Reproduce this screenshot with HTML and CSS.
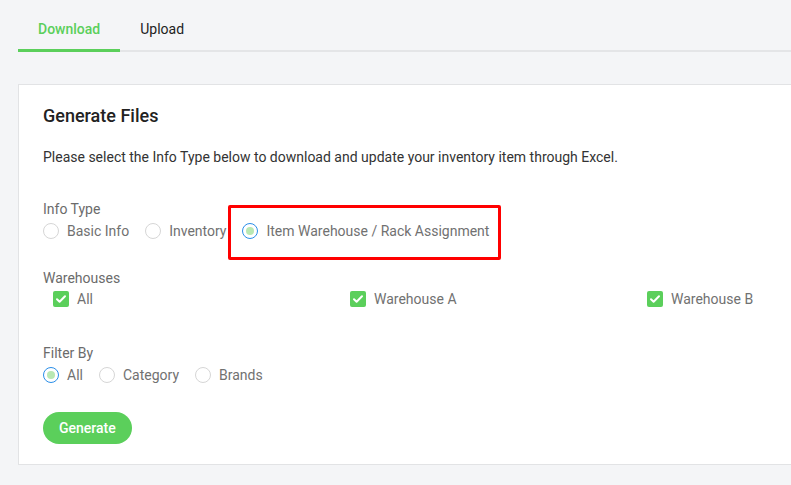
FILE: index.html
```html
<!DOCTYPE html>
<html lang="en">
<head>
  <meta charset="UTF-8" />
  <title>Import / Export Items</title>
  <link rel="stylesheet" href="styles.css">
</head>
<body>
  <div class="page">
    <ul class="tabs">
      <li class="tab active">Download</li>
      <li class="tab">Upload</li>
    </ul>

    <div class="card">
      <h2 class="card-title">Generate Files</h2>
      <p class="card-desc">Please select the Info Type below to download and update your inventory item through Excel.</p>

      <div class="field">
        <div class="field-label">Info Type</div>
        <div class="options">
          <label class="radio"><span class="dot"></span>Basic Info</label>
          <label class="radio"><span class="dot"></span>Inventory</label>
          <label class="radio checked highlight"><span class="dot"></span>Item Warehouse / Rack Assignment</label>
        </div>
      </div>

      <div class="field warehouses">
        <div class="field-label">Warehouses</div>
        <div class="check-grid">
          <label class="check"><span class="box"><svg viewBox="0 0 16 16" width="16" height="16"><path d="M4 8.2l2.6 2.5L12 5.3" fill="none" stroke="#fff" stroke-width="2" stroke-linecap="round" stroke-linejoin="round"/></svg></span>All</label>
          <label class="check"><span class="box"><svg viewBox="0 0 16 16" width="16" height="16"><path d="M4 8.2l2.6 2.5L12 5.3" fill="none" stroke="#fff" stroke-width="2" stroke-linecap="round" stroke-linejoin="round"/></svg></span>Warehouse A</label>
          <label class="check"><span class="box"><svg viewBox="0 0 16 16" width="16" height="16"><path d="M4 8.2l2.6 2.5L12 5.3" fill="none" stroke="#fff" stroke-width="2" stroke-linecap="round" stroke-linejoin="round"/></svg></span>Warehouse B</label>
        </div>
      </div>

      <div class="field filter">
        <div class="field-label">Filter By</div>
        <div class="options">
          <label class="radio checked"><span class="dot"></span>All</label>
          <label class="radio"><span class="dot"></span>Category</label>
          <label class="radio"><span class="dot"></span>Brands</label>
        </div>
      </div>

      <button class="generate-btn">Generate</button>
    </div>
  </div>
</body>
</html>
```

FILE: styles.css
```css
* {
  margin: 0;
  padding: 0;
  box-sizing: border-box;
}

html, body {
  overflow: hidden;
}

body {
  font-family: Roboto, "Liberation Sans", sans-serif;
  background-color: #f4f5f7;
  color: #333;
  font-size: 14px;
}

.page {
  padding: 0 0 0 18px;
  width: 820px;
}

.tabs {
  list-style: none;
  display: flex;
  border-bottom: 2px solid #e4e5e7;
  height: 52px;
}

.tab {
  padding: 21px 20px 0;
  height: 52px;
  font-size: 14px;
  color: #222;
  margin-bottom: -2px;
}

.tab.active {
  color: #5bcf5b;
  font-weight: 500;
  border-bottom: 3px solid #5bcf5b;
}

.card {
  margin-top: 32px;
  background: #fff;
  border: 1px solid #e2e3e5;
  padding: 20px 24px 20px;
  height: 381px;
}

.card-title {
  font-size: 18px;
  font-weight: 500;
  color: #222;
  line-height: 22px;
}

.card-desc {
  margin-top: 20px;
  line-height: 20px;
  color: #333;
}

.field {
  margin-top: 32px;
}

.field.warehouses {
  margin-top: 27px;
}

.field.filter {
  margin-top: 34px;
}

.field-label {
  color: #6b6b6b;
  line-height: 20px;
}

.options {
  display: flex;
  gap: 16px;
  margin-top: 2px;
}

.radio {
  display: flex;
  align-items: center;
  gap: 8px;
  color: #717171;
  line-height: 20px;
  position: relative;
}

.dot {
  width: 16px;
  height: 16px;
  border: 1px solid #d6d6d6;
  border-radius: 50%;
  display: inline-flex;
  align-items: center;
  justify-content: center;
}

.radio.checked .dot {
  border-color: #2a8ee8;
}

.radio.checked .dot::after {
  content: "";
  width: 8px;
  height: 8px;
  border-radius: 50%;
  background: #b9e8b3;
}

/* annotation box around the selected option */
.radio.highlight::after {
  content: "";
  position: absolute;
  left: -14px;
  right: -12px;
  top: -16px;
  bottom: -19px;
  border: 3px solid #f00;
  border-radius: 2px;
}

.check-grid {
  display: grid;
  grid-template-columns: 297px 297px 297px;
  margin-top: 1px;
}

.check {
  display: flex;
  align-items: center;
  gap: 8px;
  padding-left: 10px;
  color: #717171;
  line-height: 20px;
}

.box {
  width: 16px;
  height: 16px;
  border-radius: 2px;
  background: #5bcf5b;
  display: inline-flex;
}

.generate-btn {
  margin-top: 27px;
  height: 32px;
  padding: 0 16px;
  border: none;
  border-radius: 16px;
  background: #5bcf5b;
  color: #fff;
  font-family: inherit;
  font-size: 14px;
  font-weight: 500;
}
```
